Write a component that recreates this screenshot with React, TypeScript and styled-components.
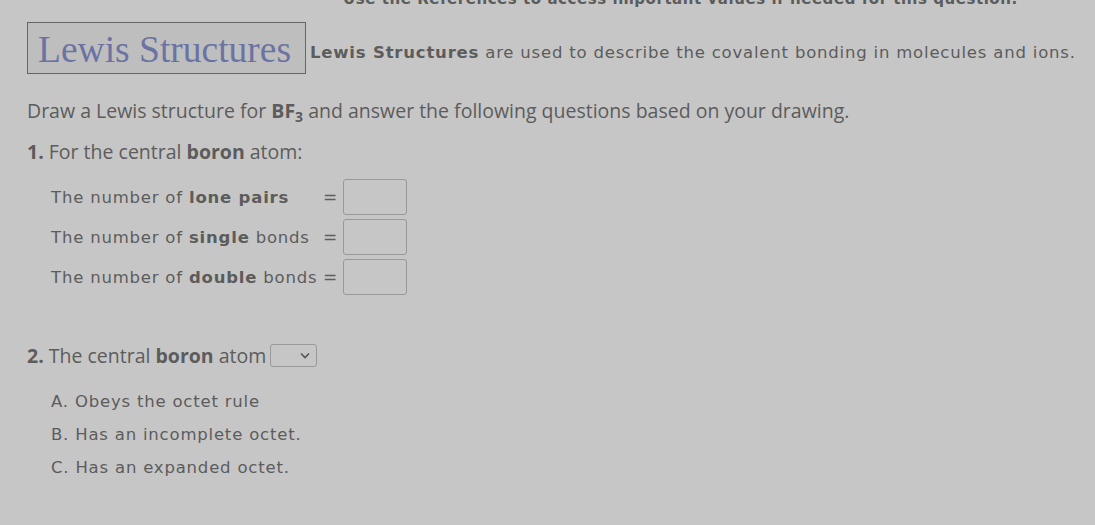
import styled, { createGlobalStyle } from 'styled-components'

const GlobalStyle = createGlobalStyle`
  html, body {
    margin: 0;
    padding: 0;
    background: #c6c6c6;
    overflow: hidden;
  }
`

const Page = styled.div`
  width: 1095px;
  height: 525px;
  background: #c6c6c6;
  color: #5c5c5c;
  font-family: 'DejaVu Sans', Verdana, sans-serif;
  padding-left: 27px;
  box-sizing: border-box;
  overflow: hidden;
`

const RefNote = styled.div`
  margin-top: -9px;
  height: 31px;
  padding-left: 316px;
  font-weight: bold;
  font-size: 15px;
  letter-spacing: 0.55px;
  line-height: 16px;
  white-space: nowrap;
`

const Intro = styled.div`
  display: flex;
  align-items: flex-end;
  gap: 4px;
`

const TitleBox = styled.div`
  width: 279px;
  height: 52px;
  border: 1px solid #666;
  background: #bebebe;
  box-sizing: border-box;
  display: flex;
  align-items: center;
  padding: 2px 0 0 10px;
  font-family: 'Liberation Serif', 'Times New Roman', serif;
  font-size: 37.5px;
  color: #6b73a3;
  white-space: nowrap;
`

const IntroText = styled.div`
  font-size: 16.5px;
  letter-spacing: 0.8px;
  padding-bottom: 12px;
  white-space: nowrap;
`

const Prompt = styled.p`
  margin: 24px 0 0;
  font-family: 'Open Sans', sans-serif;
  font-size: 19.5px;
  line-height: 25px;
  white-space: nowrap;

  sub {
    font-size: 14px;
    vertical-align: -4px;
    line-height: 0;
  }
`

const Question = styled.p<{ $top: number }>`
  margin: ${(p) => p.$top}px 0 0;
  font-family: 'Open Sans', sans-serif;
  font-size: 19.5px;
  line-height: 25px;
  white-space: nowrap;
  display: flex;
  align-items: center;
`

const Rows = styled.div`
  margin: 15px 0 0 24px;
  display: flex;
  flex-direction: column;
  gap: 4px;
`

const Row = styled.div`
  display: grid;
  grid-template-columns: 266px 24px 64px;
  column-gap: 1px;
  align-items: center;
  height: 36px;
  font-size: 16.5px;
  letter-spacing: 0.8px;
  white-space: nowrap;
`

const Eq = styled.span`
  text-align: center;
  font-size: 17px;
  letter-spacing: 0;
`

const Box = styled.div`
  width: 64px;
  height: 36px;
  box-sizing: border-box;
  border: 1px solid #999;
  border-radius: 3px;
`

const Select = styled.div`
  margin-left: 4px;
  width: 47px;
  height: 23px;
  box-sizing: border-box;
  border: 1px solid #999;
  border-radius: 3px;
  display: flex;
  align-items: center;
  justify-content: flex-end;
  padding-right: 6px;
`

const Options = styled.div`
  margin: 24px 0 0 24px;
  display: flex;
  flex-direction: column;
  gap: 14px;
  font-size: 16.5px;
  letter-spacing: 0.8px;
  line-height: 19px;
`

const rows = [
  { pre: 'The number of ', bold: 'lone pairs', post: '' },
  { pre: 'The number of ', bold: 'single', post: ' bonds' },
  { pre: 'The number of ', bold: 'double', post: ' bonds' },
]

const App = () => {
  return (
    <Page>
      <GlobalStyle />
      <RefNote>Use the References to access important values if needed for this question.</RefNote>
      <Intro>
        <TitleBox>Lewis Structures</TitleBox>
        <IntroText>
          <b>Lewis Structures</b> are used to describe the covalent bonding in molecules and ions.
        </IntroText>
      </Intro>
      <Prompt>
        Draw a Lewis structure for <b>BF<sub>3</sub></b> and answer the following questions based on your drawing.
      </Prompt>
      <Question $top={16}>
        <b>1.</b>&nbsp;For the central&nbsp;<b>boron</b>&nbsp;atom:
      </Question>
      <Rows>
        {rows.map((r) => (
          <Row key={r.bold}>
            <span>
              {r.pre}
              <b>{r.bold}</b>
              {r.post}
            </span>
            <Eq>=</Eq>
            <Box />
          </Row>
        ))}
      </Rows>
      <Question $top={48}>
        <b>2.</b>&nbsp;The central&nbsp;<b>boron</b>&nbsp;atom
        <Select>
          <svg width="10" height="7" viewBox="0 0 10 7">
            <path d="M1 1.5 L5 5.5 L9 1.5" stroke="#555" strokeWidth="1.6" fill="none" />
          </svg>
        </Select>
      </Question>
      <Options>
        <div>A. Obeys the octet rule</div>
        <div>B. Has an incomplete octet.</div>
        <div>C. Has an expanded octet.</div>
      </Options>
    </Page>
  )
}

export default App
